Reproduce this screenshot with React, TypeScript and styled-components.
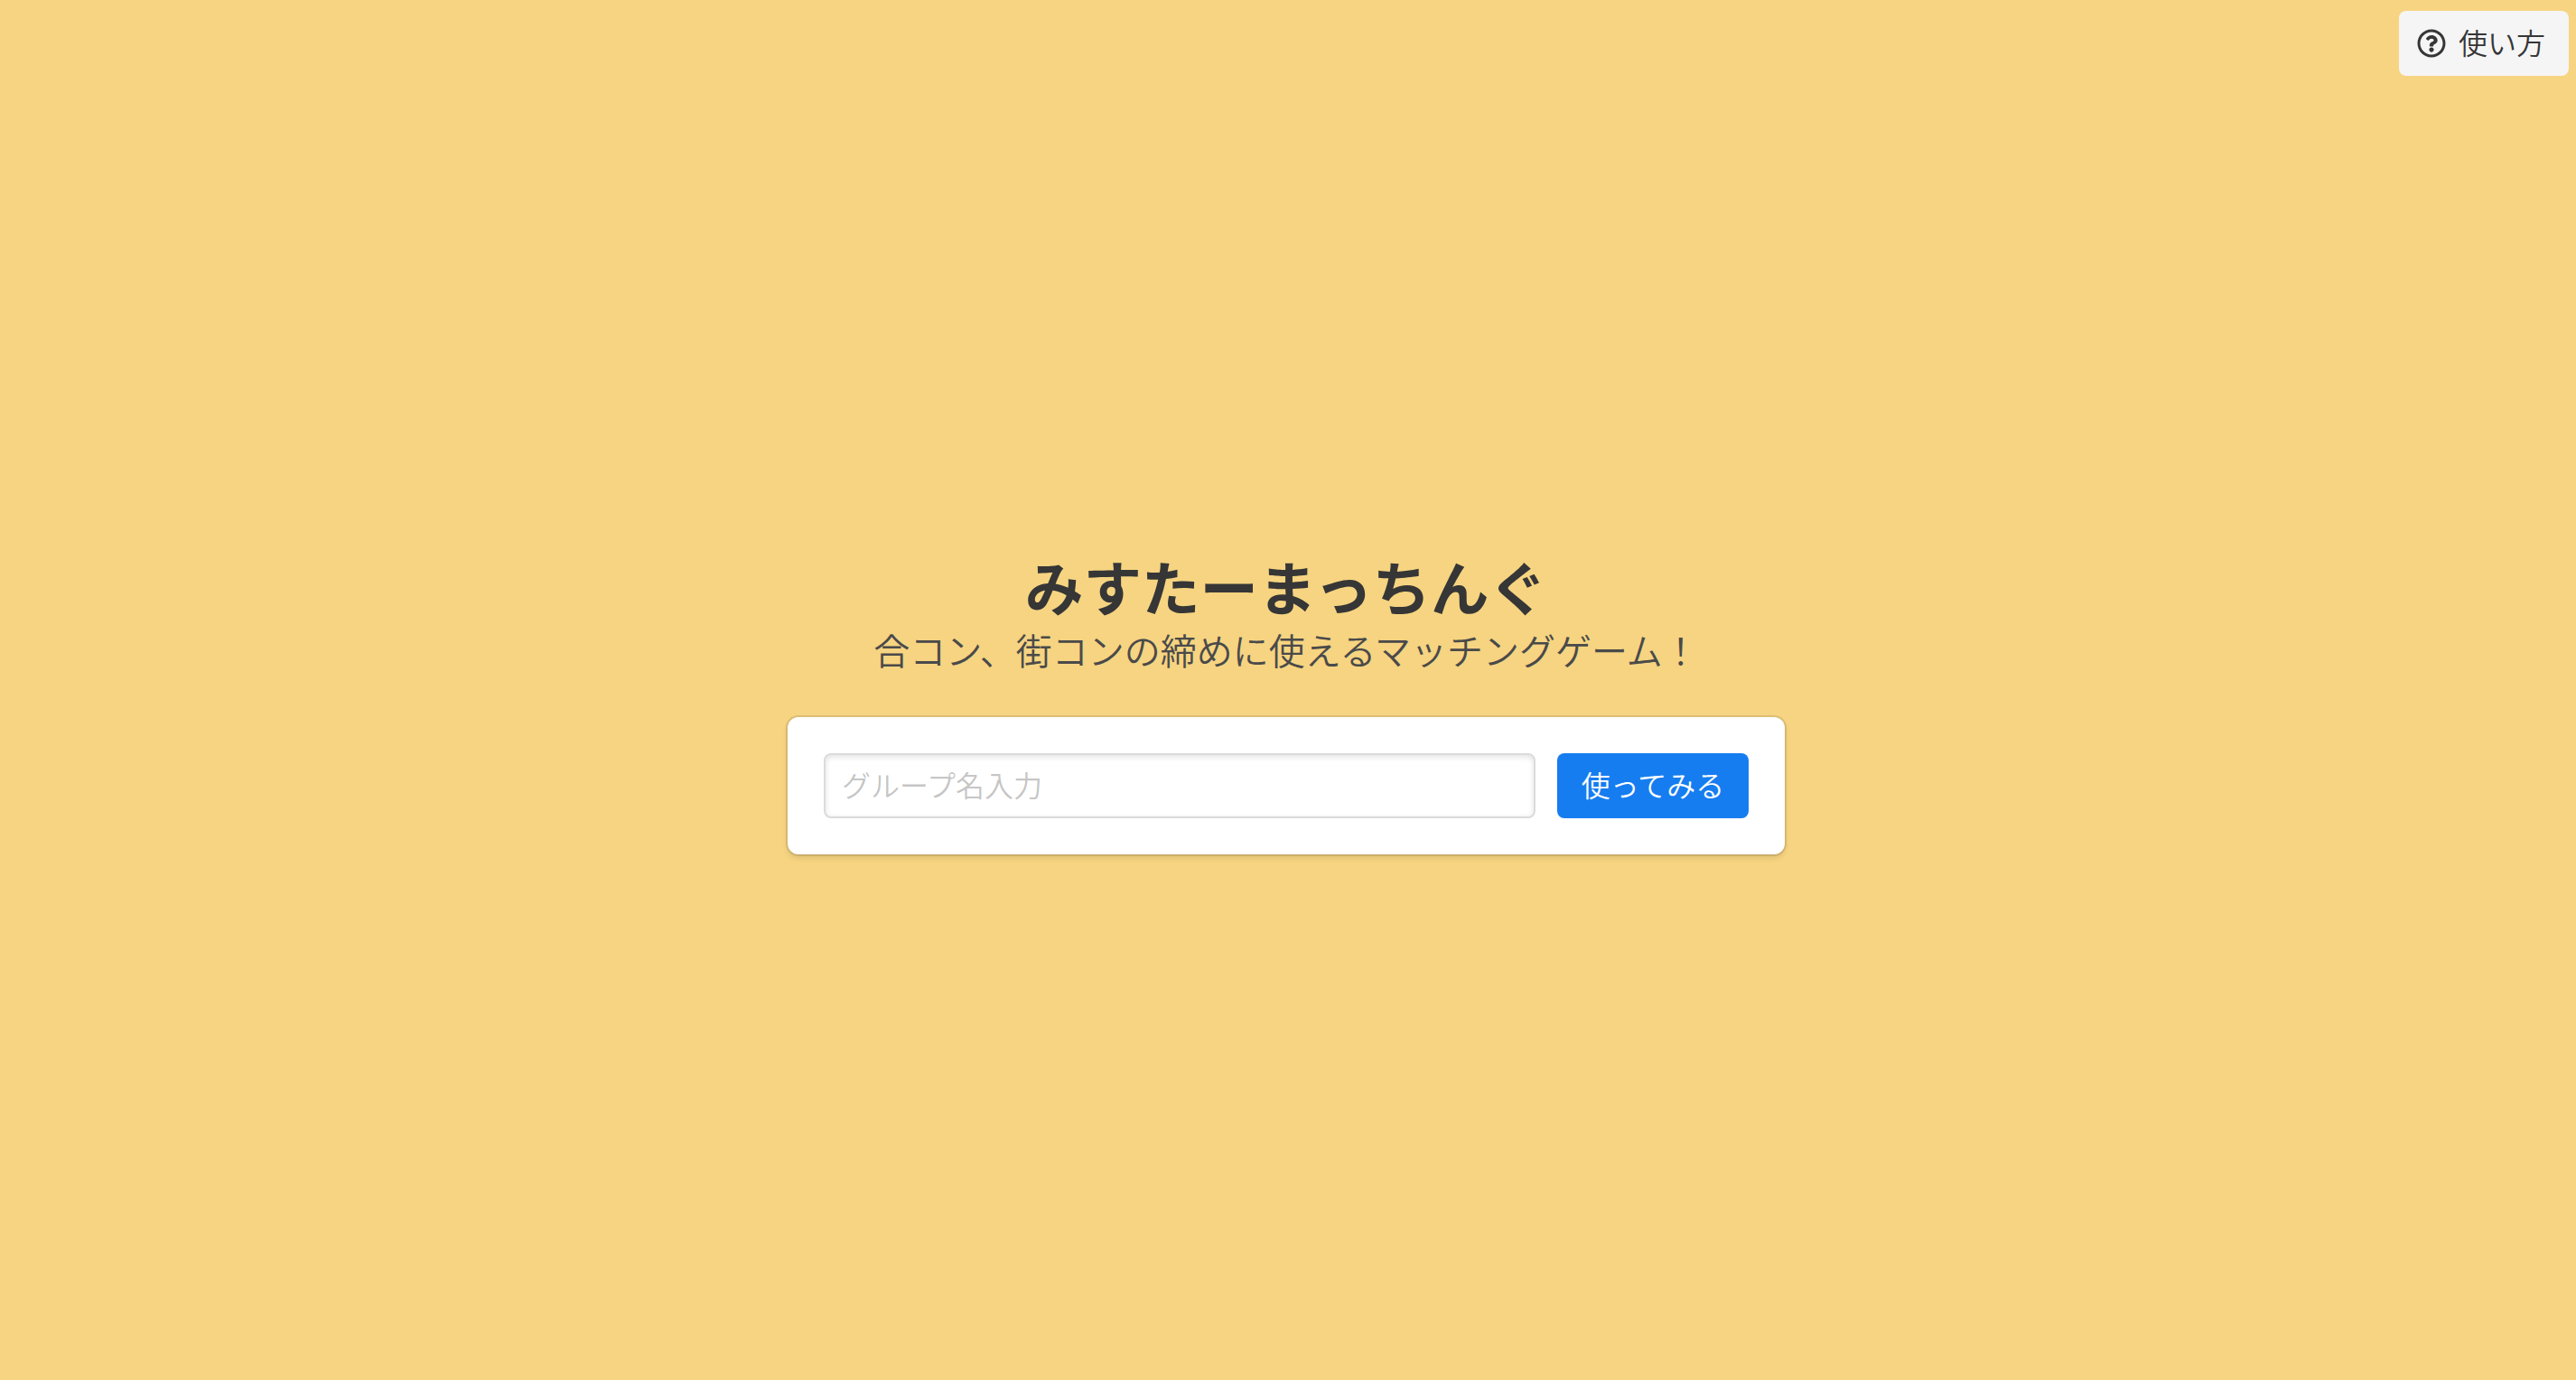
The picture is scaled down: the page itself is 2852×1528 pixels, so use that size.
import React, { useState } from 'react';
import styled, { createGlobalStyle, css } from 'styled-components';
import { FaRegQuestionCircle } from 'react-icons/fa';

const GlobalStyle = createGlobalStyle`
    *, *::before, *::after {
        box-sizing: border-box;
    }

    body {
        margin: 0;
        background: #f6d481;
        color: #4a4a4a;
        font-family: "Noto Sans CJK JP", sans-serif;
        font-size: 32px;
        font-weight: 350;
        line-height: 1.5;
    }
`;

const Page = styled.div`
    display: flex;
    flex-direction: column;
    min-height: 100vh;
    padding-right: 4px;
`;

const Header = styled.header`
    display: flex;
    justify-content: flex-end;
    padding: 12px 4px;
`;

const Main = styled.main`
    display: flex;
    flex: 1;
    flex-direction: column;
    align-items: center;
    justify-content: center;
    padding-bottom: 62px;
`;

const Title = styled.h1`
    margin: 0 0 14px;
    color: #363636;
    font-size: 64.5px;
    font-weight: 700;
    line-height: 64px;
`;

const Subtitle = styled.p`
    margin: 0 0 50px;
    font-size: 40px;
    line-height: 50px;
`;

const Box = styled.form`
    display: flex;
    gap: 24px;
    width: 1104px;
    padding: 40px;
    border-radius: 12px;
    background: #fff;
    box-shadow: 0 4px 6px rgba(10, 10, 10, 0.1), 0 0 0 2px rgba(10, 10, 10, 0.1);
`;

const control = css`
    height: 72px;
    border: 2px solid transparent;
    border-radius: 8px;
    font: inherit;
    line-height: 48px;
`;

const Input = styled.input`
    ${control}
    flex: 1;
    min-width: 0;
    padding: 8px 18px 12px;
    border-color: #dbdbdb;
    background: #fff;
    color: #363636;
    box-shadow: inset 0 2px 6px rgba(10, 10, 10, 0.12);
    outline: none;

    &::placeholder {
        color: rgba(54, 54, 54, 0.3);
        opacity: 1;
    }
`;

const Button = styled.button<{ $primary?: boolean }>`
    ${control}
    display: inline-flex;
    align-items: center;
    justify-content: center;
    padding: 8px 24px 12px;
    background: ${({ $primary }) => ($primary ? '#167df0' : '#f5f5f5')};
    color: ${({ $primary }) => ($primary ? '#fff' : '#363636')};
    white-space: nowrap;
    cursor: pointer;
    ${({ $primary }) => $primary && css`
        width: 212px;
    `}
`;

const ButtonIcon = styled.span`
    display: inline-flex;
    align-items: center;
    justify-content: center;
    width: 48px;
    height: 48px;
    margin: 4px 6px 0 -14px;
`;

const App: React.FC = () => {
    const [groupName, setGroupName] = useState('');

    const handleSubmit = (e: React.FormEvent) => {
        e.preventDefault();
    };

    return (
        <Page lang="ja">
            <GlobalStyle />
            <Header>
                <Button type="button">
                    <ButtonIcon><FaRegQuestionCircle size={32} /></ButtonIcon>
                    <span>使い方</span>
                </Button>
            </Header>
            <Main>
                <Title>みすたーまっちんぐ</Title>
                <Subtitle>合コン、街コンの締めに使えるマッチングゲーム！</Subtitle>
                <Box onSubmit={handleSubmit}>
                    <Input
                        type="text" placeholder="グループ名入力" value={groupName}
                        onChange={(e) => setGroupName(e.target.value)} />
                    <Button type="submit" $primary>使ってみる</Button>
                </Box>
            </Main>
        </Page>
    );
};

export default App;
